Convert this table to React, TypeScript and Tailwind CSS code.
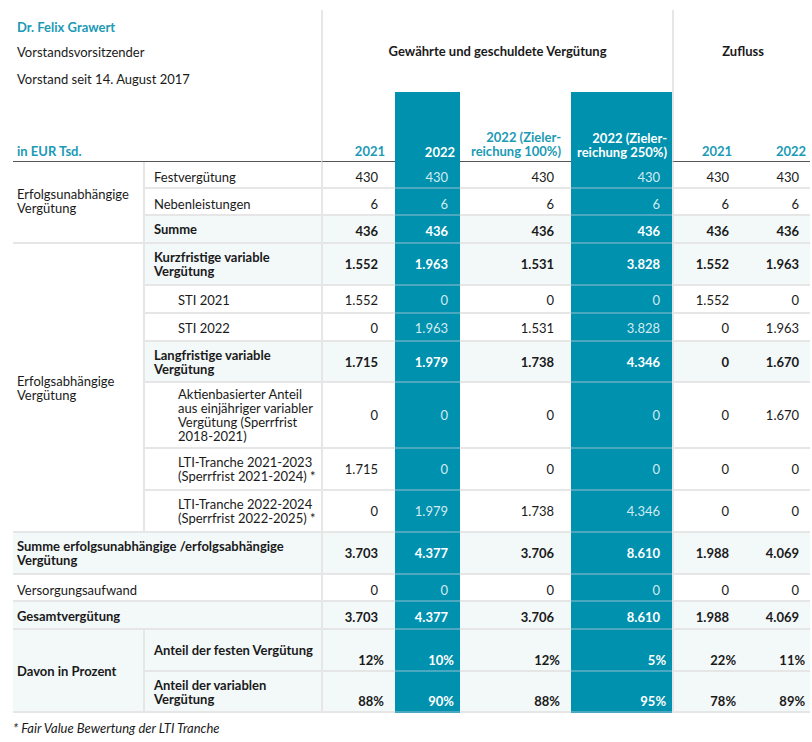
import React from 'react'

type Kind = 'plain' | 'bold' | 'pct'

const line = 'border-b-2 border-[#e6e6e6]'
const tealLine = 'border-b-2 border-[#4aa9c0]'

// padding per value column, numbers vs percent rows
const numPad = ['pr-[17px]', 'pr-[12px]', 'pr-[17px]', 'pr-[12px]', 'pr-[13px]', 'pr-[11px]']
const pctPad = ['pr-[11px]', 'pr-[6px]', 'pr-[11px]', 'pr-[6px]', 'pr-[6px]', 'pr-[5px]']

const Values: React.FC<{ values: string[]; kind?: Kind; shaded?: boolean; pt?: string }> = ({
    values,
    kind = 'plain',
    shaded,
    pt = '',
}) => (
    <>
        {values.map((v, i) => {
            const teal = i === 1 || i === 3
            const bold = kind !== 'plain'
            return (
                <td
                    key={i}
                    className={[
                        'text-right',
                        pt,
                        kind === 'pct' ? 'align-bottom pb-[3px]' : 'align-middle',
                        kind === 'pct' ? pctPad[i] : numPad[i],
                        i === 0 || i === 4 ? 'border-l-2 border-l-[#e6e6e6]' : '',
                        teal ? `bg-[#0091ae] ${tealLine}` : `${line} ${shaded ? 'bg-[#f3f8f9]' : ''}`,
                        teal ? (bold ? 'text-white font-bold' : 'text-[#d3ebf1]') : bold ? 'font-bold' : '',
                    ].join(' ')}
                >
                    {v}
                </td>
            )
        })}
    </>
)

const SubLabel: React.FC<{ children: React.ReactNode; bold?: boolean; shaded?: boolean; indent?: boolean; pt?: string }> = ({
    children,
    bold,
    shaded,
    indent,
    pt = '',
}) => (
    <td
        className={[
            line,
            'align-middle',
            pt,
            indent ? 'pl-[33px]' : 'pl-[9px]',
            bold ? 'font-bold' : '',
            shaded ? 'bg-[#f3f8f9]' : '',
        ].join(' ')}
    >
        {children}
    </td>
)

export default function App() {
    return (
        <div
            className="bg-white w-[812px] h-[742px] pl-[13px] pt-[10px] text-[13px] leading-[14px] text-[#1a1a1a]"
            style={{ fontFamily: 'Lato, "Open Sans", sans-serif' }}
        >
            <table className="table-fixed w-[797px] border-separate border-spacing-0">
                <colgroup>
                    <col className="w-[132px]" />
                    <col className="w-[176px]" />
                    <col className="w-[74px]" />
                    <col className="w-[65px]" />
                    <col className="w-[111px]" />
                    <col className="w-[101px]" />
                    <col className="w-[70px]" />
                    <col className="w-[68px]" />
                </colgroup>
                <thead>
                    <tr className="h-[82px]">
                        <td colSpan={2} rowSpan={2} className="align-top border-b border-[#555]">
                            <div className="h-[151px] flex flex-col pl-[4px] leading-[16px]">
                                <div className="mt-[9px] font-bold text-[#1b9ab5]">Dr. Felix Grawert</div>
                                <div className="mt-[9px]">Vorstandsvorsitzender</div>
                                <div className="mt-[11px]">Vorstand seit 14. August 2017</div>
                                <div className="mt-auto mb-[2px] font-bold text-[#1b9ab5]">in EUR Tsd.</div>
                            </div>
                        </td>
                        <th colSpan={4} className="border-l-2 border-l-[#e6e6e6] align-middle text-center font-bold">
                            Gewährte und geschuldete Vergütung
                        </th>
                        <th colSpan={2} className="border-l-2 border-l-[#e6e6e6] align-middle text-center font-bold pl-[2px]">
                            Zufluss
                        </th>
                    </tr>
                    <tr className="h-[70px] font-bold">
                        <th className="border-l-2 border-l-[#e6e6e6] border-b border-b-[#555] align-bottom text-right pr-[10px] pb-[3px] text-[#1b9ab5]">
                            2021
                        </th>
                        <th className="bg-[#0091ae] align-bottom text-right pr-[5px] pb-[3px] text-white">2022</th>
                        <th className="border-b border-b-[#555] align-bottom text-right pr-[10px] pb-[3px] text-[#1b9ab5]">
                            2022 (Zieler-
                            <br />
                            reichung 100%)
                        </th>
                        <th className="bg-[#0091ae] align-bottom text-right pr-[5px] pb-[3px] text-white">
                            2022 (Zieler-
                            <br />
                            reichung 250%)
                        </th>
                        <th className="border-l-2 border-l-[#e6e6e6] border-b border-b-[#555] align-bottom text-right pr-[10px] pb-[3px] text-[#1b9ab5]">
                            2021
                        </th>
                        <th className="border-b border-b-[#555] align-bottom text-right pr-[4px] pb-[3px] text-[#1b9ab5]">
                            2022
                        </th>
                    </tr>
                </thead>
                <tbody>
                    <tr className="h-[27px]">
                        <td rowSpan={3} className={`${line} border-r-2 border-r-[#e6e6e6] align-middle pl-[4px] pb-[2px]`}>
                            Erfolgsunabhängige Vergütung
                        </td>
                        <SubLabel pt="pt-[5px]">Festvergütung</SubLabel>
                        <Values values={['430', '430', '430', '430', '430', '430']} pt="pt-[5px]" />
                    </tr>
                    <tr className="h-[27px]">
                        <SubLabel pt="pt-[5px]">Nebenleistungen</SubLabel>
                        <Values values={['6', '6', '6', '6', '6', '6']} pt="pt-[5px]" />
                    </tr>
                    <tr className="h-[28px]">
                        <SubLabel bold shaded>
                            Summe
                        </SubLabel>
                        <Values values={['436', '436', '436', '436', '436', '436']} kind="bold" shaded pt="pt-[4px]" />
                    </tr>

                    <tr className="h-[42px]">
                        <td rowSpan={7} className={`${line} border-r-2 border-r-[#e6e6e6] align-middle pl-[4px]`}>
                            Erfolgsabhängige Vergütung
                        </td>
                        <SubLabel bold shaded>
                            Kurzfristige variable Vergütung
                        </SubLabel>
                        <Values values={['1.552', '1.963', '1.531', '3.828', '1.552', '1.963']} kind="bold" shaded />
                    </tr>
                    <tr className="h-[28px]">
                        <SubLabel indent pt="pt-[2px]">
                            STI 2021
                        </SubLabel>
                        <Values values={['1.552', '0', '0', '0', '1.552', '0']} pt="pt-[2px]" />
                    </tr>
                    <tr className="h-[28px]">
                        <SubLabel indent pt="pt-[2px]">
                            STI 2022
                        </SubLabel>
                        <Values values={['0', '1.963', '1.531', '3.828', '0', '1.963']} pt="pt-[2px]" />
                    </tr>
                    <tr className="h-[41px]">
                        <SubLabel bold shaded>
                            Langfristige variable Vergütung
                        </SubLabel>
                        <Values values={['1.715', '1.979', '1.738', '4.346', '0', '1.670']} kind="bold" shaded />
                    </tr>
                    <tr className="h-[66px]">
                        <SubLabel indent>
                            Aktienbasierter Anteil aus einjähriger variabler Vergütung (Sperrfrist 2018-2021)
                        </SubLabel>
                        <Values values={['0', '0', '0', '0', '0', '1.670']} />
                    </tr>
                    <tr className="h-[42px]">
                        <SubLabel indent>
                            LTI-Tranche 2021-2023
                            <br />
                            (Sperrfrist 2021-2024) *
                        </SubLabel>
                        <Values values={['1.715', '0', '0', '0', '0', '0']} />
                    </tr>
                    <tr className="h-[42px]">
                        <SubLabel indent>
                            LTI-Tranche 2022-2024
                            <br />
                            (Sperrfrist 2022-2025) *
                        </SubLabel>
                        <Values values={['0', '1.979', '1.738', '4.346', '0', '0']} />
                    </tr>

                    <tr className="h-[42px]">
                        <td colSpan={2} className={`${line} bg-[#f3f8f9] font-bold align-middle pl-[4px]`}>
                            Summe erfolgsunabhängige /erfolgsabhängige Vergütung
                        </td>
                        <Values values={['3.703', '4.377', '3.706', '8.610', '1.988', '4.069']} kind="bold" shaded />
                    </tr>
                    <tr className="h-[27px]">
                        <td colSpan={2} className={`${line} align-middle pl-[4px] pt-[5px]`}>
                            Versorgungsaufwand
                        </td>
                        <Values values={['0', '0', '0', '0', '0', '0']} pt="pt-[5px]" />
                    </tr>
                    <tr className="h-[28px]">
                        <td colSpan={2} className={`${line} bg-[#f3f8f9] font-bold align-middle pl-[4px] pt-[1px]`}>
                            Gesamtvergütung
                        </td>
                        <Values values={['3.703', '4.377', '3.706', '8.610', '1.988', '4.069']} kind="bold" shaded pt="pt-[4px]" />
                    </tr>

                    <tr className="h-[42px]">
                        <td
                            rowSpan={2}
                            className={`${line} border-r-2 border-r-[#e6e6e6] bg-[#f3f8f9] font-bold align-middle pl-[4px]`}
                        >
                            Davon in Prozent
                        </td>
                        <SubLabel bold shaded>
                            Anteil der festen Vergütung
                        </SubLabel>
                        <Values values={['12%', '10%', '12%', '5%', '22%', '11%']} kind="pct" shaded />
                    </tr>
                    <tr className="h-[41px]">
                        <SubLabel bold shaded>
                            Anteil der variablen
                            <br />
                            Vergütung
                        </SubLabel>
                        <Values values={['88%', '90%', '88%', '95%', '78%', '89%']} kind="pct" shaded />
                    </tr>
                </tbody>
            </table>
            <p className="mt-[7px] italic leading-[16px]">* Fair Value Bewertung der LTI Tranche</p>
        </div>
    )
}
